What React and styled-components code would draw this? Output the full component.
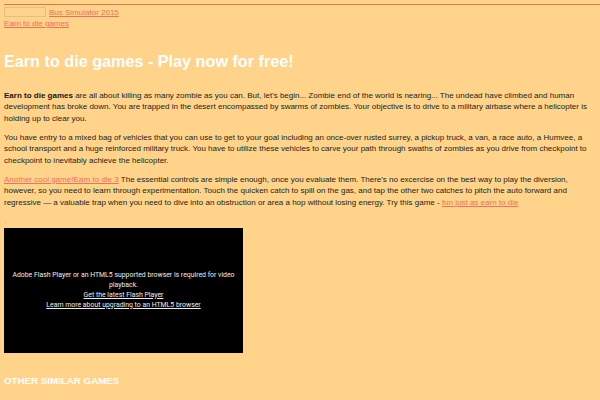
import React from "react";
import styled, { createGlobalStyle } from "styled-components";

const GlobalStyle = createGlobalStyle`
	html, body {
		margin: 0;
		padding: 0;
		background: #ffd38a;
	}
	body {
		font-family: "Liberation Sans", Arial, sans-serif;
		color: #241f1a;
	}
`;

const Page = styled.div`
	padding: 4px 4px 0 4px;
	font-size: 8px;
	line-height: 11.5px;
`;

const TopBar = styled.div`
	border-top: 1.5px solid #f0704f;
	margin: 0 -4px 0 0;
	padding-top: 1px;
	display: flex;
	align-items: flex-end;
	gap: 3px;
	height: 12px;
`;

const BrokenImage = styled.span`
	display: inline-block;
	width: 42px;
	height: 10px;
	margin-bottom: 1px;
	border: 1px solid #e3bf84;
	box-sizing: border-box;
`;

const Link = styled.a`
	color: #f2705a;
	text-decoration: underline;
	cursor: pointer;
`;

const Crumb = styled.div`
	margin-top: 0px;
`;

const Title = styled.h1`
	margin: 22px 0 19px 0;
	font-size: 16.2px;
	line-height: 19px;
	font-weight: bold;
	color: #ffffff;
`;

const Paragraph = styled.p`
	margin: 0 0 7.5px 0;
`;

const Bold = styled.b`
	font-weight: bold;
	color: #1a1612;
`;

const Dot = styled.div`
	width: 1px;
	height: 1px;
	margin: 14px 0 5px 1px;
	background: #c9ab7a;
`;

const Player = styled.div`
	width: 239px;
	height: 125px;
	background: #000;
	color: #ededed;
	font-family: Roboto, "Liberation Sans", sans-serif;
	font-size: 6.9px;
	line-height: 10px;
	display: flex;
	flex-direction: column;
	align-items: center;
	justify-content: center;
	text-align: center;
	padding: 0 8px 2px 8px;
	box-sizing: border-box;
`;

const PlayerLink = styled.a`
	color: #ededed;
	text-decoration: underline;
`;

const SectionTitle = styled.h2`
	margin: 22px 0 10px 0;
	font-size: 9.75px;
	line-height: 12px;
	font-weight: bold;
	color: #ffffff;
	text-transform: uppercase;
`;

export default function App() {
	return (
		<>
			<GlobalStyle />
			<Page>
				<TopBar>
					<BrokenImage />
					<Link>Bus Simulator 2015</Link>
				</TopBar>
				<Crumb>
					<Link>Earn to die games</Link>
				</Crumb>
				<Title>Earn to die games - Play now for free!</Title>
				<Paragraph>
					<Bold>Earn to die games</Bold> are all about killing as many zombie as
					you can. But, let's begin... Zombie end of the world is nearing... The
					undead have climbed and human development has broke down. You are
					trapped in the desert encompassed by swarms of zombies. Your objective
					is to drive to a military airbase where a helicopter is holding up to
					clear you.
				</Paragraph>
				<Paragraph>
					You have entry to a mixed bag of vehicles that you can use to get to
					your goal including an once-over rusted surrey, a pickup truck, a van,
					a race auto, a Humvee, a school transport and a huge reinforced
					military truck. You have to utilize these vehicles to carve your path
					through swaths of zombies as you drive from checkpoint to checkpoint
					to inevitably achieve the helicopter.
				</Paragraph>
				<Paragraph>
					<Link>Another cool game!Earn to die 3</Link> The essential controls
					are simple enough, once you evaluate them. There's no excercise on the
					best way to play the diversion, however, so you need to learn through
					experimentation. Touch the quicken catch to spill on the gas, and tap
					the other two catches to pitch the auto forward and regressive — a
					valuable trap when you need to dive into an obstruction or area a hop
					without losing energy. Try this game -{" "}
					<Link>fun just as earn to die</Link>
				</Paragraph>
				<Dot />
				<Player>
					<div>
						Adobe Flash Player or an HTML5 supported browser is required for
						video playback.
					</div>
					<PlayerLink>Get the latest Flash Player</PlayerLink>
					<PlayerLink>Learn more about upgrading to an HTML5 browser</PlayerLink>
				</Player>
				<SectionTitle>Other similar games</SectionTitle>
				<Link>Scrap Metal</Link>
			</Page>
		</>
	);
}
